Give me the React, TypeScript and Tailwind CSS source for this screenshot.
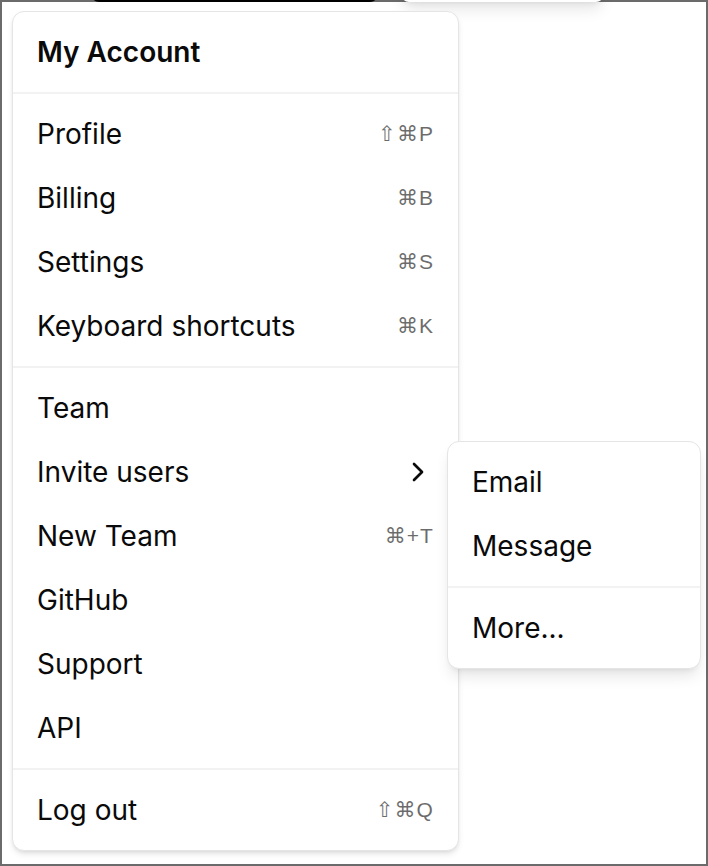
import { ChevronRight } from "lucide-react";

type Item = { label: string; shortcut?: string; sub?: boolean };

const groups: Item[][] = [
  [
    { label: "Profile", shortcut: "⇧⌘P" },
    { label: "Billing", shortcut: "⌘B" },
    { label: "Settings", shortcut: "⌘S" },
    { label: "Keyboard shortcuts", shortcut: "⌘K" },
  ],
  [
    { label: "Team" },
    { label: "Invite users", sub: true },
    { label: "New Team", shortcut: "⌘+T" },
    { label: "GitHub" },
    { label: "Support" },
    { label: "API" },
  ],
  [{ label: "Log out", shortcut: "⇧⌘Q" }],
];

function Separator() {
  return <div className="-mx-2 my-2 h-[2px] bg-[#f2f2f2]" />;
}

function MenuItem({ item }: { item: Item }) {
  return (
    <div className="flex h-16 items-center px-4 text-[28px]">
      <span>{item.label}</span>
      {item.shortcut && (
        <span className="ml-auto font-['Liberation_Sans','DejaVu_Sans',sans-serif] text-[21px] tracking-[0.05em] opacity-60">
          {item.shortcut}
        </span>
      )}
      {item.sub && <ChevronRight className="ml-auto" size={32} strokeWidth={2} />}
    </div>
  );
}

export default function App() {
  return (
    <div className="h-[866px] w-[708px] border-2 border-[#6b6b6b] bg-white font-['Inter','Liberation_Sans',sans-serif] text-[#0a0a0a]">
      {/* triggers scrolled off the top */}
      <div className="-mt-[40px] ml-[89px] flex h-[40px] gap-[23px]">
        <div className="w-[287px] rounded-lg bg-black" />
        <div className="w-[203px] rounded-lg bg-white shadow-lg" />
      </div>

      <div className="relative ml-[10px] mt-[9px] w-[447px] rounded-xl border border-[#e5e5e5] bg-white p-2 shadow-md">
        <div className="flex h-16 items-center px-4 text-[28px] font-semibold">
          My Account
        </div>
        {groups.map((group, i) => (
          <div key={i}>
            <Separator />
            {group.map((item) => (
              <MenuItem key={item.label} item={item} />
            ))}
          </div>
        ))}

        {/* Invite users submenu */}
        <div className="absolute left-[434px] top-[429px] w-[254px] rounded-xl border border-[#e5e5e5] bg-white p-2 shadow-lg">
          <MenuItem item={{ label: "Email" }} />
          <MenuItem item={{ label: "Message" }} />
          <Separator />
          <MenuItem item={{ label: "More..." }} />
        </div>
      </div>
    </div>
  );
}
